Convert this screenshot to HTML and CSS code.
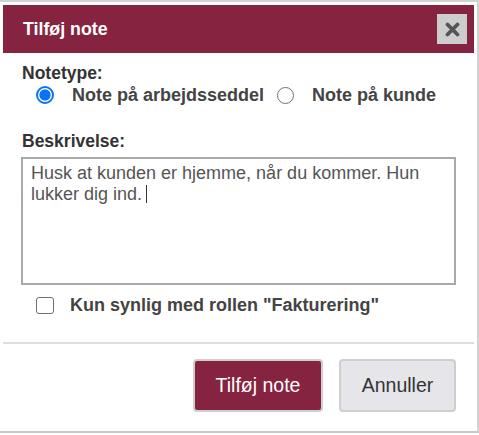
FILE: index.html
```html
<!DOCTYPE html>
<html lang="da">
<head>
<meta charset="utf-8">
<title>Tilføj note</title>
<link rel="stylesheet" href="styles.css">
</head>
<body>
<div class="dialog">
  <div class="header">
    <span class="title">Tilføj note</span>
    <button class="close" type="button" aria-label="Luk">
      <svg width="15" height="15" viewBox="0 0 15 15"><path d="M2.5 2.5 L12.5 12.5 M12.5 2.5 L2.5 12.5" stroke="#555" stroke-width="3.8" stroke-linecap="round"/></svg>
    </button>
  </div>
  <div class="content">
    <div class="label">Notetype:</div>
    <div class="radio-row">
      <label class="opt"><span class="radio checked"></span><span>Note på arbejdsseddel</span></label>
      <label class="opt"><span class="radio"></span><span>Note på kunde</span></label>
    </div>
    <div class="label label-desc">Beskrivelse:</div>
    <div class="textarea">Husk at kunden er hjemme, når du kommer. Hun lukker dig ind.<span class="caret"></span></div>
    <label class="check-row"><span class="checkbox"></span><span>Kun synlig med rollen "Fakturering"</span></label>
  </div>
  <div class="divider"></div>
  <div class="footer">
    <button class="btn btn-primary" type="button">Tilføj note</button>
    <button class="btn btn-secondary" type="button">Annuller</button>
  </div>
</div>
</body>
</html>
```
FILE: styles.css
```css
html, body {
  margin: 0;
  padding: 0;
  background: #fff;
}
body {
  font-family: "Liberation Sans", Arial, sans-serif;
  color: #333;
}
.dialog {
  width: 471px;
  padding: 3px 3px 19px 3px;
  border-top: 2px solid #d2d2d2;
  border-right: 2px solid #d2d2d2;
  border-bottom: 2px solid #c8c8c8;
  box-shadow: 0 2px 0 #e8e8e8;
  background: #fff;
}
.header {
  height: 48px;
  background: #862340;
  display: flex;
  align-items: center;
  justify-content: space-between;
  padding: 0 7px 0 20px;
}
.title {
  color: #fff;
  font-weight: bold;
  font-size: 17.8px;
}
.close {
  width: 30px;
  height: 30px;
  border: none;
  padding: 0;
  background: #cdcdcd;
  display: flex;
  align-items: center;
  justify-content: center;
}
.content {
  padding: 0 18px 0 18px;
}
.label {
  margin-top: 10px;
  padding-left: 1px;
  font-size: 17.5px;
  line-height: 20px;
  font-weight: bold;
  color: #333;
}
.label-desc {
  margin-top: 24px;
}
.radio-row {
  display: flex;
  align-items: center;
  height: 24px;
  padding-left: 15px;
  gap: 13px;
}
.opt {
  display: flex;
  align-items: center;
  gap: 18px;
  font-size: 18px;
  font-weight: bold;
  color: #444;
}
.radio {
  width: 15px;
  height: 15px;
  border-radius: 50%;
  border: 1.5px solid #6f6f6f;
  box-sizing: content-box;
  flex: none;
}
.radio.checked {
  border: 2px solid #0b72f5;
  width: 14px;
  height: 14px;
  background: radial-gradient(circle, #0b72f5 0 5.2px, #fff 6px);
}
.textarea {
  margin-top: 6px;
  width: 435px;
  height: 128px;
  box-sizing: border-box;
  border: 2px solid #a9a9a9;
  padding: 4px 8px;
  font-size: 18px;
  line-height: 21px;
  color: #555;
}
.caret {
  display: inline-block;
  width: 1px;
  height: 18px;
  background: #333;
  margin-left: 4px;
  vertical-align: -3px;
}
.check-row {
  margin-top: 9px;
  height: 22px;
  display: flex;
  align-items: center;
  padding-left: 15px;
  gap: 16px;
  font-size: 18px;
  font-weight: bold;
  color: #444;
}
.checkbox {
  width: 16px;
  height: 15px;
  border: 1.5px solid #6f6f6f;
  border-radius: 3px;
  flex: none;
}
.divider {
  margin-top: 26px;
  height: 2px;
  background: #dedede;
}
.footer {
  display: flex;
  justify-content: flex-end;
  gap: 16px;
  margin-top: 15px;
  padding-right: 18px;
}
.btn {
  height: 53px;
  border: 2px solid #cfcfcf;
  border-radius: 4px;
  font-family: "Liberation Sans", Arial, sans-serif;
  font-size: 19.5px;
  padding: 0;
}
.btn-primary {
  width: 130px;
  background: #862340;
  color: #fff;
}
.btn-secondary {
  width: 117px;
  background: #e6e6ea;
  color: #333;
}
```
